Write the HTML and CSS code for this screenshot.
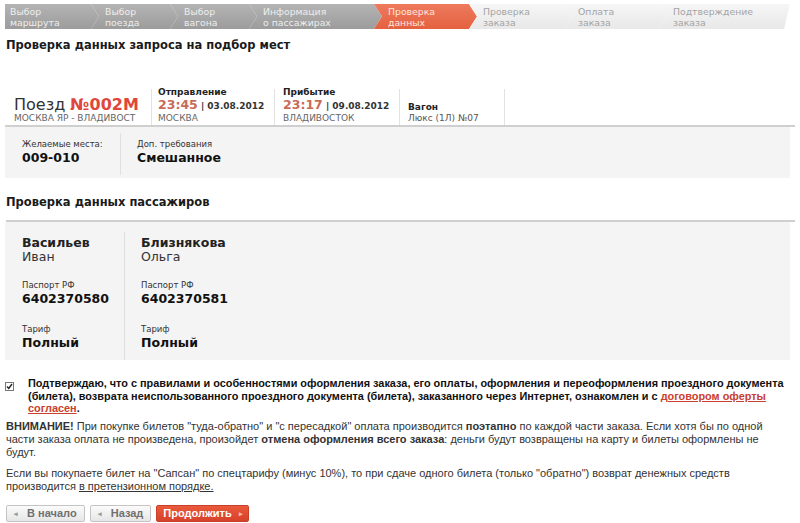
FILE: index.html
```html
<!DOCTYPE html>
<html lang="ru">
<head>
    <meta charset="UTF-8">
    <title>Проверка данных</title>
    <link rel="stylesheet" href="styles.css">
</head>
<body>

    <div class="steps">
        <div class="step done first">Выбор<br>маршрута</div>
        <div class="step done" style="width:87px">Выбор<br>поезда</div>
        <div class="step done" style="width:87px">Выбор<br>вагона</div>
        <div class="step done" style="width:133px">Информация<br>о пассажирах</div>
        <div class="step active">Проверка<br>данных</div>
        <div class="step todo">Проверка<br>заказа</div>
        <div class="step todo">Оплата<br>заказа</div>
        <div class="step todo last">Подтверждение<br>заказа</div>
    </div>

    <h2 class="title">Проверка данных запроса на подбор мест</h2>

    <div class="train">
        <div class="train-col col-train">
            <div class="train-name">Поезд <span class="red">№002М</span></div>
            <div class="sub">МОСКВА ЯР - ВЛАДИВОСТ</div>
        </div>
        <div class="train-col col-dep">
            <div class="lbl">Отправление</div>
            <div class="when"><span class="time">23:45</span> | 03.08.2012</div>
            <div class="sub">МОСКВА</div>
        </div>
        <div class="train-col col-arr">
            <div class="lbl">Прибытие</div>
            <div class="when"><span class="time">23:17</span> | 09.08.2012</div>
            <div class="sub">ВЛАДИВОСТОК</div>
        </div>
        <div class="train-col col-car">
            <div class="lbl">Вагон</div>
            <div class="sub car">Люкс (1Л) №07</div>
        </div>
    </div>

    <div class="grey-box request">
        <div class="req-col req-seats">
            <div class="small">Желаемые места:</div>
            <div class="big">009-010</div>
        </div>
        <div class="req-col">
            <div class="small">Доп. требования</div>
            <div class="big">Смешанное</div>
        </div>
    </div>

    <h2 class="title pass-title">Проверка данных пассажиров</h2>

    <div class="grey-box passengers">
        <div class="passenger first-pass">
            <div class="surname">Васильев</div>
            <div class="name">Иван</div>
            <div class="small">Паспорт РФ</div>
            <div class="big">6402370580</div>
            <div class="small">Тариф</div>
            <div class="big">Полный</div>
        </div>
        <div class="passenger">
            <div class="surname">Близнякова</div>
            <div class="name">Ольга</div>
            <div class="small">Паспорт РФ</div>
            <div class="big">6402370581</div>
            <div class="small">Тариф</div>
            <div class="big">Полный</div>
        </div>
    </div>

    <div class="agree">
        <span class="check">
            <svg width="9" height="9" viewBox="0 0 9 9"><rect x="0.5" y="0.5" width="8" height="8" fill="#fff" stroke="#777"/><path d="M2 4.5 L3.8 6.5 L7 2" fill="none" stroke="#222" stroke-width="1.4"/></svg>
        </span>
        <p>Подтверждаю, что с правилами и особенностями оформления заказа, его оплаты, оформления и переоформления проездного документа (билета), возврата неиспользованного проездного документа (билета), заказанного через Интернет, ознакомлен и с <a href="#" class="red-link">договором оферты согласен</a>.</p>
    </div>

    <p class="note first-note"><b>ВНИМАНИЕ!</b> При покупке билетов "туда-обратно" и "с пересадкой" оплата производится <b>поэтапно</b> по каждой части заказа. Если хотя бы по одной части заказа оплата не произведена, произойдет <b>отмена оформления всего заказа</b>: деньги будут возвращены на карту и билеты оформлены не будут.</p>

    <p class="note">Если вы покупаете билет на "Сапсан" по спецтарифу (минус 10%), то при сдаче одного билета (только "обратно") возврат денежных средств производится <a href="#" class="dark-link">в претензионном порядке.</a></p>

    <div class="buttons">
        <a href="#" class="btn grey-btn"><span class="arr">&#9666;</span> В начало</a>
        <a href="#" class="btn grey-btn"><span class="arr">&#9666;</span> Назад</a>
        <a href="#" class="btn red-btn">Продолжить <span class="arr">&#9656;</span></a>
    </div>

</body>
</html>
```

FILE: styles.css
```css
body {
    font-family: "Liberation Sans", Arial, sans-serif;
    font-size: 11px;
    color: #222;
    background-color: white;
    margin: 0;
    padding: 4px 5px 0 5px;
}

/* step bar */
.steps {
    display: flex;
    height: 25px;
}

    .step {
        font-family: "DejaVu Sans", Verdana, sans-serif;
        font-size: 9.3px;
        line-height: 11px;
        padding: 2px 0 0 14px;
        box-sizing: border-box;
        width: 103px;
        flex-shrink: 0;
        margin-right: -8px;
        clip-path: polygon(0 0, calc(100% - 8px) 0, 100% 50%, calc(100% - 8px) 100%, 0 100%, 8px 50%);
    }

    .step.first {
        width: 94px;
        padding-left: 5px;
        clip-path: polygon(0 0, calc(100% - 8px) 0, 100% 50%, calc(100% - 8px) 100%, 0 100%);
    }

    .step.last {
        width: 131px;
        margin-right: 0;
        clip-path: polygon(0 0, 100% 0, calc(100% - 6px) 100%, 0 100%, 8px 50%);
    }

    .step.done {
        background: linear-gradient(#b4b4b4, #9c9c9c);
        color: #eeeeee;
    }

    .step.active {
        background: linear-gradient(#ee7a5e, #e4613f);
        color: #fde4dc;
    }

    .step.todo {
        background: linear-gradient(#f6f6f6, #e8e8e8);
        color: #a4a4a4;
    }

.title {
    font-family: "DejaVu Sans", Verdana, sans-serif;
    font-size: 11.5px;
    font-weight: bold;
    margin: 9px 0 0 1px;
    color: #1a1a1a;
}

/* train info */
.train {
    display: flex;
    align-items: flex-end;
    margin-top: 37px;
    height: 36px;
    border-bottom: 2px solid #cfcfcf;
    font-family: "DejaVu Sans", Verdana, sans-serif;
}

    .train-col {
        height: 36px;
        border-right: 1px solid #e2e2e2;
        box-sizing: border-box;
        display: flex;
        flex-direction: column;
        justify-content: flex-end;
        padding-bottom: 1px;
    }

.col-train {
    width: 147px;
    padding-left: 9px;
}

.col-dep {
    width: 123px;
    padding-left: 6px;
}

.col-arr {
    width: 125px;
    padding-left: 8px;
}

.col-car {
    width: 105px;
    padding-left: 8px;
}

.train-name {
    font-size: 16px;
    line-height: 17px;
    color: #333;
}

.red {
    color: #e0473a;
    font-weight: bold;
}

.sub {
    font-size: 9px;
    line-height: 11px;
    color: #666;
}

.lbl {
    font-size: 9px;
    line-height: 11px;
    font-weight: bold;
    color: #222;
}

.when {
    font-size: 9px;
    line-height: 13px;
    font-weight: bold;
    color: #333;
}

.time {
    font-size: 12.5px;
    color: #c96b57;
}

.car {
    color: #555;
}

/* grey boxes */
.grey-box {
    background-color: #f4f4f4;
    display: flex;
    margin-right: 5px;
    font-family: "DejaVu Sans", Verdana, sans-serif;
}

.request {
    height: 51px;
    padding: 6px 0 3px 17px;
    box-sizing: border-box;
}

    .req-col {
        padding-top: 6px;
    }

    .req-seats {
        width: 98px;
        border-right: 1px solid #e0e0e0;
        margin-right: 16px;
    }

.small {
    font-size: 8.5px;
    line-height: 11px;
    color: #333;
}

.big {
    font-size: 12.5px;
    line-height: 15px;
    font-weight: bold;
    color: #111;
}

.pass-title {
    margin-top: 17px;
    padding-bottom: 11px;
    border-bottom: 2px solid #cfcfcf;
}

.passengers {
    height: 138px;
    padding: 10px 0 0 17px;
    box-sizing: border-box;
}

    .passenger {
        width: 103px;
        height: 128px;
        padding-top: 4px;
        box-sizing: border-box;
    }

    .passenger.first-pass {
        border-right: 1px solid #e0e0e0;
        margin-right: 16px;
    }

    .passenger .surname {
        font-size: 12.5px;
        line-height: 14px;
        font-weight: bold;
    }

    .passenger .name {
        font-size: 12.5px;
        line-height: 14px;
        color: #333;
        margin-bottom: 16px;
    }

    .passenger .big {
        margin-bottom: 18px;
    }

/* agreement and notes */
.agree {
    display: flex;
    margin-top: 17px;
    margin-right: 0;
}

    .check {
        width: 23px;
        padding-top: 4px;
        flex-shrink: 0;
    }

    .agree p {
        margin: 0;
        font-weight: bold;
        font-size: 10.9px;
        line-height: 12.5px;
        color: #111;
    }

.red-link {
    color: #c9402e;
}

.dark-link {
    color: #333;
}

.note {
    margin: 8px 10px 0 1px;
    line-height: 13px;
    color: #333;
}

.note.first-note {
    margin-top: 5px;
}

/* buttons */
.buttons {
    display: flex;
    gap: 5px;
    margin-top: 12px;
    margin-left: 1px;
}

    .btn {
        font-weight: bold;
        font-size: 11px;
        height: 17px;
        line-height: 15px;
        padding: 0 7px;
        text-decoration: none;
        box-sizing: border-box;
        border-radius: 2px;
    }

    .grey-btn {
        background: linear-gradient(#fbfbfb, #e6e6e6);
        border: 1px solid #c4c4c4;
        color: #707070;
    }

    .red-btn {
        background: linear-gradient(#ea5a3c, #d8402a);
        border: 1px solid #c8402a;
        color: white;
        padding: 0 5px 0 6px;
    }

    .arr {
        font-size: 7px;
        color: #999;
        margin-right: 6px;
        vertical-align: 1px;
    }

    .red-btn .arr {
        color: #fbc0b0;
        margin: 0 0 0 4px;
    }
```
